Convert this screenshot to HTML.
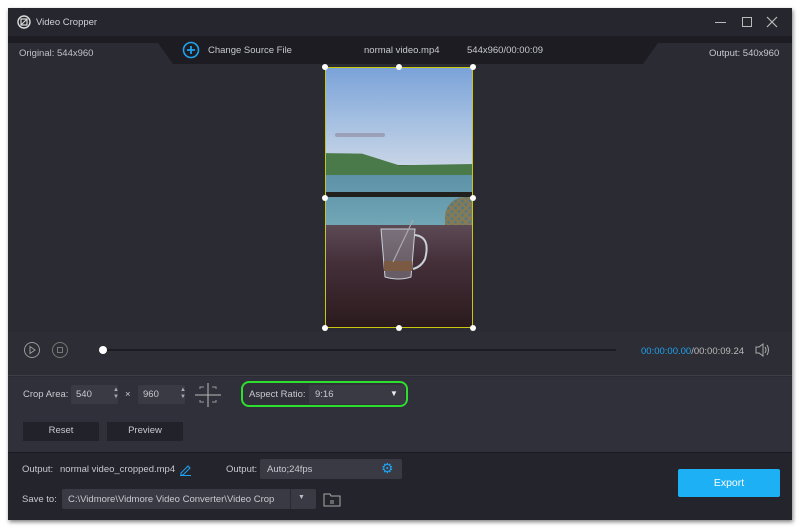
<!DOCTYPE html>
<html><head><meta charset="utf-8"><style>
*{margin:0;padding:0;box-sizing:border-box}
body{width:800px;height:528px;background:#fff;font-family:"Liberation Sans",sans-serif;font-size:9.5px;color:#c8c8d0;position:relative;overflow:hidden}
.win{position:absolute;left:8px;top:8px;width:784px;height:512px;background:#2b2b34;box-shadow:1px 2px 4px rgba(0,0,0,.5)}
.a{position:absolute}
.title{left:0;top:0;width:784px;height:28px;background:#26262e}
.hdr{left:0;top:28px;width:784px;height:28px;background:#1c1c22}
.tabL{left:0;top:35px;width:170px;height:21px;background:#2b2b34;clip-path:polygon(0 0,150px 0,165px 100%,0 100%)}
.tabR{left:632px;top:35px;width:152px;height:21px;background:#2b2b34;clip-path:polygon(18px 0,100% 0,100% 100%,3px 100%)}
.box{background:#3a3a44;border-radius:2px}
.btn{background:#22222a;color:#c8c8d0;text-align:center;line-height:18px}
.h{position:absolute;width:6px;height:6px;border-radius:50%;background:#fff;margin:-3px 0 0 -3px}
</style></head><body>
<div class="win">
<div class="a title"></div>
<svg class="a" style="left:9px;top:7px" width="14" height="14" viewBox="0 0 14 14"><circle cx="7" cy="7" r="6" fill="none" stroke="#ddd" stroke-width="1.4"/><rect x="4" y="4" width="6" height="6" fill="none" stroke="#ddd" stroke-width="1.2"/><path d="M4 10L10 4" stroke="#ddd" stroke-width="1.1"/></svg>
<div class="a" style="left:28px;top:9px;color:#d0d0d8">Video Cropper</div>
<div class="a" style="left:707px;top:14px;width:11px;height:1px;background:#bbb"></div>
<div class="a" style="left:734px;top:9px;width:10px;height:10px;border:1px solid #bbb"></div>
<svg class="a" style="left:758px;top:8px" width="12" height="12"><path d="M1 1L11 11M11 1L1 11" stroke="#bbb" stroke-width="1.2"/></svg>
<div class="a hdr"></div>
<div class="a tabL"></div><div class="a tabR"></div>
<div class="a" style="left:11px;top:40px;color:#c0c0c8">Original: 544x960</div>
<svg class="a" style="left:174px;top:33px" width="18" height="18"><circle cx="9" cy="9" r="7.5" fill="none" stroke="#1fa3ef" stroke-width="1.6"/><path d="M9 5V13M5 9H13" stroke="#1fa3ef" stroke-width="1.8"/></svg>
<div class="a" style="left:200px;top:37px">Change Source File</div>
<div class="a" style="left:356px;top:37px">normal video.mp4</div>
<div class="a" style="left:459px;top:37px">544x960/00:00:09</div>
<div class="a" style="left:701px;top:40px">Output: 540x960</div>
<!-- video -->
<div class="a" style="left:317px;top:59px;width:148px;height:261px;overflow:hidden;background:#3b2a28">
 <div class="a" style="left:0;top:0;width:148px;height:98px;background:linear-gradient(#7aa2d8,#a8c2e2 60%,#c8d4e6)"></div>
 <div class="a" style="left:10px;top:66px;width:50px;height:4px;background:#9aa0b8;border-radius:3px"></div>
 <div class="a" style="left:0;top:84px;width:148px;height:26px;background:#4a7a4a;clip-path:polygon(0 8%,25% 10%,50% 55%,100% 50%,100% 100%,0 100%)"></div>
 <div class="a" style="left:0;top:108px;width:148px;height:60px;background:linear-gradient(#5e92a8,#74aab8)"></div>
 <div class="a" style="left:0;top:125px;width:148px;height:5px;background:#22201c"></div>
 <div class="a" style="left:120px;top:130px;width:28px;height:55px;background:repeating-linear-gradient(45deg,#8a7a50 0 2px,transparent 2px 5px),repeating-linear-gradient(-45deg,#8a7a50 0 2px,#5a7a80 2px 5px);border-radius:20px 0 0 0"></div>
 <div class="a" style="left:0;top:158px;width:148px;height:103px;background:linear-gradient(#5c4a55,#45303a 35%,#2a1a1c)"></div>
 <svg class="a" style="left:50px;top:150px" width="60" height="70"><path d="M6 12L10 60Q24 64 36 60L40 12Z" fill="rgba(200,210,220,.3)" stroke="#c8d0d8" stroke-width="1"/><path d="M40 18Q56 20 50 42Q46 50 38 52" fill="none" stroke="#c8d0d8" stroke-width="2"/><rect x="9" y="44" width="28" height="10" fill="#7a5a42"/><path d="M18 45L38 3" stroke="#aaa" stroke-width="1.2"/></svg>
</div>
<div class="a" style="left:317px;top:59px;width:148px;height:261px;border:1px solid #c8c810"></div>
<div class="h" style="left:317px;top:59px"></div><div class="h" style="left:391px;top:59px"></div><div class="h" style="left:465px;top:59px"></div>
<div class="h" style="left:317px;top:190px"></div><div class="h" style="left:465px;top:190px"></div>
<div class="h" style="left:317px;top:320px"></div><div class="h" style="left:391px;top:320px"></div><div class="h" style="left:465px;top:320px"></div>
<!-- controls -->
<div class="a" style="left:0;top:324px;width:784px;height:44px;background:#2d2d36;border-bottom:1px solid #3e3e48"></div>
<svg class="a" style="left:15px;top:333px" width="18" height="18"><circle cx="9" cy="9" r="7.5" fill="none" stroke="#999" stroke-width="1"/><path d="M7 5.5L12 9L7 12.5Z" fill="none" stroke="#999"/></svg>
<svg class="a" style="left:43px;top:333px" width="18" height="18"><circle cx="9" cy="9" r="7.5" fill="none" stroke="#777" stroke-width="1"/><rect x="6.5" y="6.5" width="5" height="5" fill="none" stroke="#777"/></svg>
<div class="a" style="left:95px;top:341px;width:513px;height:2px;background:#1c1c22"></div>
<div class="a" style="left:91px;top:338px;width:8px;height:8px;border-radius:50%;background:#fff"></div>
<div class="a" style="left:633px;top:338px;font-size:9.5px"><span style="color:#1fa3ef">00:00:00.00</span><span style="color:#bbb">/00:00:09.24</span></div>
<svg class="a" style="left:747px;top:335px" width="16" height="14"><path d="M1 4H4L8 1V13L4 10H1Z" fill="none" stroke="#aaa"/><path d="M10 4Q12 7 10 10M12 2Q15 7 12 12" fill="none" stroke="#aaa"/></svg>
<!-- crop settings -->
<div class="a" style="left:0;top:369px;width:784px;height:75px;background:#30303a"></div>
<div class="a" style="left:15px;top:381px">Crop Area:</div>
<div class="a box" style="left:63px;top:377px;width:47px;height:19px"></div>
<div class="a" style="left:68px;top:381px">540</div>
<div class="a" style="left:105px;top:379px;font-size:6px;color:#aaa;line-height:7px">▲<br>▼</div>
<div class="a" style="left:117px;top:381px">×</div>
<div class="a box" style="left:130px;top:377px;width:47px;height:19px"></div>
<div class="a" style="left:135px;top:381px">960</div>
<div class="a" style="left:172px;top:379px;font-size:6px;color:#aaa;line-height:7px">▲<br>▼</div>
<svg class="a" style="left:186px;top:374px" width="28" height="26"><path d="M14 1V25M1 13H27" stroke="#bbb" stroke-width="1"/><path d="M6 7V5H10M18 5H22V7M6 18V20H10M18 20H22V18" fill="none" stroke="#999"/></svg>
<div class="a" style="left:233px;top:373px;width:167px;height:26px;border:2px solid #2ee02e;border-radius:8px"></div>
<div class="a" style="left:241px;top:381px">Aspect Ratio:</div>
<div class="a box" style="left:301px;top:377px;width:96px;height:19px"></div>
<div class="a" style="left:307px;top:381px">9:16</div>
<div class="a" style="left:382px;top:381px;font-size:8px;color:#eee">▼</div>
<div class="a btn" style="left:15px;top:414px;width:76px;height:19px">Reset</div>
<div class="a btn" style="left:99px;top:414px;width:76px;height:19px">Preview</div>
<!-- bottom -->
<div class="a" style="left:0;top:444px;width:784px;height:68px;background:#24242c;border-top:1px solid #18181e"></div>
<div class="a" style="left:14px;top:456px">Output:</div>
<div class="a" style="left:52px;top:456px">normal video_cropped.mp4</div>
<svg class="a" style="left:171px;top:455px" width="13" height="13"><path d="M2 10L9 3L11 5L4 12H2Z M1 12.5H12" fill="none" stroke="#1fa3ef"/></svg>
<div class="a" style="left:218px;top:456px">Output:</div>
<div class="a box" style="left:252px;top:451px;width:142px;height:20px"></div>
<div class="a" style="left:259px;top:456px">Auto;24fps</div>
<div class="a" style="left:373px;top:452px;font-size:14px;color:#1fa3ef">⚙</div>
<div class="a" style="left:14px;top:486px">Save to:</div>
<div class="a box" style="left:54px;top:481px;width:254px;height:20px"></div>
<div class="a" style="left:60px;top:486px">C:\Vidmore\Vidmore Video Converter\Video Crop</div>
<div class="a" style="left:282px;top:481px;width:1px;height:20px;background:#2a2a32"></div>
<div class="a" style="left:290px;top:486px;font-size:7px;color:#bbb">▼</div>
<svg class="a" style="left:315px;top:484px" width="18" height="15"><path d="M1 2H7L8 4H17V14H1Z" fill="none" stroke="#aaa"/><path d="M7 9H11M7 11H11" stroke="#aaa"/></svg>
<div class="a" style="left:670px;top:461px;width:102px;height:28px;background:#1db0f5;border-radius:2px;color:#fff;text-align:center;line-height:28px;font-size:10.5px">Export</div>
</div>
</body></html>
